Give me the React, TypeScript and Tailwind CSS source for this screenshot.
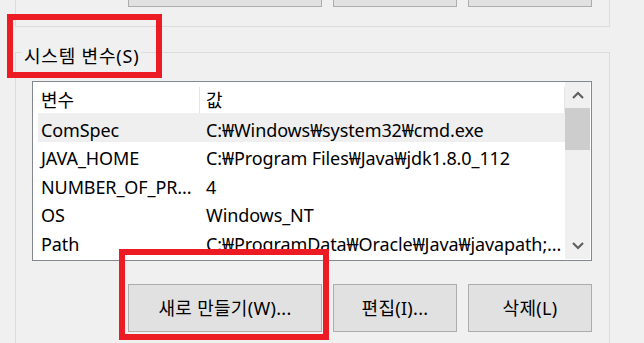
import React from "react";

const rows = [
  { name: "ComSpec", value: "C:₩Windows₩system32₩cmd.exe", selected: true },
  { name: "JAVA_HOME", value: "C:₩Program Files₩Java₩jdk1.8.0_112" },
  { name: "NUMBER_OF_PR...", value: "4" },
  { name: "OS", value: "Windows_NT" },
  { name: "Path", value: "C:₩ProgramData₩Oracle₩Java₩javapath;..." },
];

function Btn({ w, label }: { w: string; label: string }) {
  return (
    <div
      className={`${w} h-[48px] shrink-0 bg-[#e1e1e1] border border-[#adadad] flex items-center justify-center text-[18px] text-black tracking-[0.3px]`}
    >
      {label}
    </div>
  );
}

export default function App() {
  return (
    <div
      className="w-[644px] h-[343px] bg-[#f0f0f0] relative overflow-hidden text-[#000]"
      style={{ fontFamily: '"Noto Sans", "Noto Sans CJK KR", sans-serif' }}
    >
      {/* user variables group (bottom part) */}
      <div className="ml-[15px] w-[595px] h-[27px] border-x border-b border-[#dcdcdc] flex items-end justify-end gap-[11px] pr-[17px] pb-[19px]">
        <div className="w-[194px] h-[47px] shrink-0 bg-[#e1e1e1] border border-[#adadad]" />
        <div className="w-[124px] h-[47px] shrink-0 bg-[#e1e1e1] border border-[#adadad]" />
        <div className="w-[124px] h-[47px] shrink-0 bg-[#e1e1e1] border border-[#adadad]" />
      </div>

      {/* system variables group */}
      <div className="relative mt-[25px] ml-[15px] w-[595px] h-[291px] border-x border-t border-[#dcdcdc] pt-[28px] pl-[16px]">
        <span className="absolute left-[6px] top-[-8px] px-[2px] bg-[#f0f0f0] text-[18px] leading-[22px] tracking-[0.8px]">
          시스템 변수(S)
        </span>

        <div className="w-[560px] h-[180px] border border-[#828790] bg-white flex">
          <div className="flex-1 flex flex-col min-w-0">
            <div className="h-[31px] flex items-center pt-[5px] text-[18px] shrink-0">
              <div className="w-[167px] h-full flex items-center pl-[8px] border-r border-[#e5e5e5]">변수</div>
              <div className="flex-1 h-full flex items-center pl-[6px] border-r border-[#e5e5e5]">값</div>
            </div>
            <div className="pl-[5px] overflow-hidden">
              {rows.map((r) => (
                <div
                  key={r.name}
                  className={`h-[28.5px] flex items-center pt-[6px] text-[18px] whitespace-nowrap tracking-[-0.1px] ${
                    r.selected ? "bg-[#efefef]" : ""
                  }`}
                >
                  <span className="w-[165px] pl-[3px] shrink-0">{r.name}</span>
                  <span className="pl-[3px]">{r.value}</span>
                </div>
              ))}
            </div>
          </div>
          <div className="w-[25px] mr-[1px] mb-[1px] bg-[#f0f0f0] flex flex-col shrink-0">
            <div className="h-[26px] flex items-center justify-center">
              <svg width="12" height="8" viewBox="0 0 12 8">
                <polyline points="1,7 6,2 11,7" fill="none" stroke="#606060" strokeWidth="2.2" />
              </svg>
            </div>
            <div className="h-[42px] bg-[#cdcdcd]" />
            <div className="flex-1" />
            <div className="h-[26px] flex items-center justify-center">
              <svg width="12" height="8" viewBox="0 0 12 8">
                <polyline points="1,1 6,6 11,1" fill="none" stroke="#606060" strokeWidth="2.2" />
              </svg>
            </div>
          </div>
        </div>

        <div className="w-[560px] mt-[23px] flex justify-end gap-[11px]">
          <Btn w="w-[194px]" label="새로 만들기(W)..." />
          <Btn w="w-[124px]" label="편집(I)..." />
          <Btn w="w-[124px]" label="삭제(L)" />
        </div>
      </div>

      {/* red highlight boxes */}
      <div className="absolute left-[7px] top-[14px] w-[155px] h-[64px] border-[6px] border-[#ed1c24]" />
      <div className="absolute left-[119px] top-[249px] w-[210px] h-[91px] border-[6px] border-[#ed1c24]" />
    </div>
  );
}
